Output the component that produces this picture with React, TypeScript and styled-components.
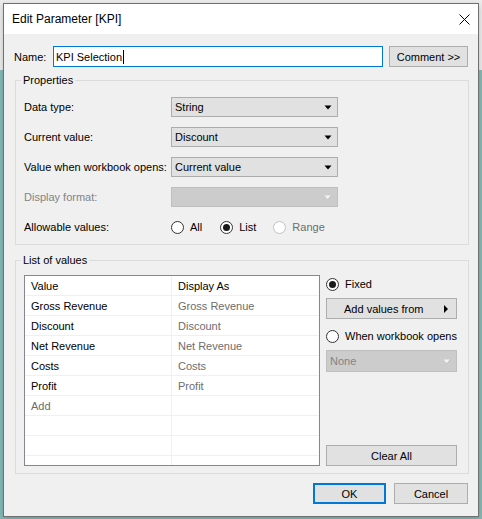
import React from "react";
import styled, { createGlobalStyle } from "styled-components";

const GlobalStyle = createGlobalStyle`
  html, body {
    margin: 0;
    padding: 0;
  }
  body {
    width: 482px;
    height: 519px;
    overflow: hidden;
    background: linear-gradient(to bottom, #ececec 0, #ececec 70px, #86bbb7 70px);
    font-family: "Liberation Sans", Arial, sans-serif;
    font-size: 11px;
    color: #000;
  }
`;

const Window = styled.div`
  margin: 3px 0 0 3px;
  width: 476px;
  height: 514px;
  box-sizing: border-box;
  border: 1px solid #707070;
  background: #f0f0f0;
  display: flex;
  flex-direction: column;
  box-shadow: 0 2px 6px rgba(0, 0, 0, 0.2);
`;

const TitleBar = styled.div`
  height: 30px;
  flex: none;
  background: #fff;
  display: flex;
  align-items: center;
  justify-content: space-between;
  padding: 0 8px 0 8px;
  font-size: 12px;
`;

const Body = styled.div`
  flex: 1;
  display: flex;
  flex-direction: column;
  padding: 12px 10px 12px 10px;
`;

const NameRow = styled.div`
  display: flex;
  align-items: center;
  height: 21px;
`;

const NameLabel = styled.span`
  width: 39px;
  flex: none;
`;

const NameField = styled.div`
  width: 330px;
  height: 21px;
  box-sizing: border-box;
  border: 1px solid #0078d7;
  background: #fff;
  display: flex;
  align-items: center;
  padding-left: 2px;
`;

const Caret = styled.span`
  display: inline-block;
  width: 1px;
  height: 14px;
  background: #000;
  margin-left: 1px;
`;

const Button = styled.div<{ $width?: number; $primary?: boolean; $left?: boolean }>`
  width: ${(p) => (p.$width ? `${p.$width}px` : "auto")};
  height: 21px;
  box-sizing: border-box;
  border: ${(p) => (p.$primary ? "2px solid #0078d7" : "1px solid #adadad")};
  background: #e1e1e1;
  display: flex;
  align-items: center;
  justify-content: ${(p) => (p.$left ? "space-between" : "center")};
  padding: ${(p) => (p.$left ? "0 8px 0 17px" : "0")};
  flex: none;
`;

const Group = styled.fieldset<{ $top: number }>`
  margin: ${(p) => p.$top}px -1px 0 1px;
  border: 1px solid #dcdcdc;
  padding: 10px 10px 7px 8px;
  min-width: 0;
`;

const Legend = styled.legend`
  padding: 0 2px;
  margin-left: -3px;
  line-height: 14px;
`;

const PropGrid = styled.div`
  display: grid;
  grid-template-columns: 147px 167px;
  grid-auto-rows: 20px;
  row-gap: 10px;
  align-items: center;
`;

const Label = styled.span<{ $disabled?: boolean }>`
  color: ${(p) => (p.$disabled ? "#838383" : "#000")};
  white-space: nowrap;
`;

const Combo = styled.div<{ $disabled?: boolean; $height?: number }>`
  height: ${(p) => p.$height ?? 20}px;
  box-sizing: border-box;
  border: 1px solid ${(p) => (p.$disabled ? "#bfbfbf" : "#adadad")};
  background: ${(p) => (p.$disabled ? "#cccccc" : "#e1e1e1")};
  color: ${(p) => (p.$disabled ? "#838383" : "#000")};
  display: flex;
  align-items: center;
  justify-content: space-between;
  padding: 0 5px 0 3px;
`;

const RadioRow = styled.div`
  display: flex;
  align-items: center;
  gap: 0;
`;

const RadioItem = styled.span<{ $disabled?: boolean; $gap?: number }>`
  display: inline-flex;
  align-items: center;
  margin-right: ${(p) => p.$gap ?? 0}px;
  color: ${(p) => (p.$disabled ? "#6d6d6d" : "#000")};
  white-space: nowrap;
`;

const RadioCircle = styled.span<{ $checked?: boolean; $disabled?: boolean }>`
  width: 13px;
  height: 13px;
  box-sizing: border-box;
  border-radius: 50%;
  border: 1px solid ${(p) => (p.$disabled ? "#c2c2c2" : "#333")};
  background: #fff;
  display: inline-flex;
  align-items: center;
  justify-content: center;
  margin-right: 6px;
  &::after {
    content: "";
    width: 7px;
    height: 7px;
    border-radius: 50%;
    background: ${(p) => (p.$checked ? "#1a1a1a" : "transparent")};
  }
`;

const ListArea = styled.div`
  display: flex;
  gap: 6px;
`;

const Table = styled.div`
  width: 296px;
  height: 191px;
  box-sizing: border-box;
  border: 1px solid #828790;
  background: #fff;
  overflow: hidden;
`;

const TableRow = styled.div`
  display: grid;
  grid-template-columns: 146px 1fr;
  height: 20px;
  box-sizing: border-box;
  border-bottom: 1px solid #f0f0f0;
`;

const Cell = styled.div<{ $muted?: boolean }>`
  display: flex;
  align-items: center;
  padding-left: 6px;
  color: ${(p) => (p.$muted ? "#6d6d6d" : "#000")};
  & + & {
    border-left: 1px solid #f0f0f0;
  }
`;

const SideColumn = styled.div`
  width: 131px;
  display: flex;
  flex-direction: column;
`;

const SideRadio = styled.div<{ $top: number }>`
  height: 16px;
  margin-top: ${(p) => p.$top}px;
  display: flex;
  align-items: center;
`;

const Footer = styled.div`
  display: flex;
  justify-content: flex-end;
  gap: 8px;
  margin-top: 9px;
`;

const Arrow = ({ disabled }: { disabled?: boolean }) => (
  <svg width="8" height="5" viewBox="0 0 8 5">
    {disabled ? (
      <>
        <path d="M0.5 0.5 L7.5 0.5 L4 4.5 Z" fill="#f2f2f2" />
        <path d="M4 4.5 L7.5 0.5" stroke="#b0b0b0" strokeWidth="0.8" fill="none" />
      </>
    ) : (
      <path d="M0.5 0.5 L7.5 0.5 L4 4.5 Z" fill="#000" />
    )}
  </svg>
);

const RightArrow = () => (
  <svg width="4" height="8" viewBox="0 0 4 8">
    <path d="M0 0 L4 4 L0 8 Z" fill="#000" />
  </svg>
);

const CloseIcon = () => (
  <svg width="11" height="11" viewBox="0 0 11 11">
    <path d="M0.5 0.5 L10.5 10.5 M10.5 0.5 L0.5 10.5" stroke="#000" strokeWidth="1" />
  </svg>
);

const Radio = ({
  label,
  checked,
  disabled,
  gap,
}: {
  label: string;
  checked?: boolean;
  disabled?: boolean;
  gap?: number;
}) => (
  <RadioItem $disabled={disabled} $gap={gap}>
    <RadioCircle $checked={checked} $disabled={disabled} />
    {label}
  </RadioItem>
);

const values = ["Gross Revenue", "Discount", "Net Revenue", "Costs", "Profit"];

export default function App() {
  return (
    <>
      <GlobalStyle />
      <Window>
        <TitleBar>
          <span>Edit Parameter [KPI]</span>
          <CloseIcon />
        </TitleBar>
        <Body>
          <NameRow>
            <NameLabel>Name:</NameLabel>
            <NameField>
              KPI Selection
              <Caret />
            </NameField>
            <div style={{ width: 6 }} />
            <Button $width={79}>Comment &gt;&gt;</Button>
          </NameRow>

          <Group $top={6}>
            <Legend>Properties</Legend>
            <PropGrid>
              <Label>Data type:</Label>
              <Combo>
                String
                <Arrow />
              </Combo>
              <Label>Current value:</Label>
              <Combo>
                Discount
                <Arrow />
              </Combo>
              <Label>Value when workbook opens:</Label>
              <Combo>
                Current value
                <Arrow />
              </Combo>
              <Label $disabled>Display format:</Label>
              <Combo $disabled>
                <span />
                <Arrow disabled />
              </Combo>
              <Label>Allowable values:</Label>
              <RadioRow>
                <Radio label="All" gap={18} />
                <Radio label="List" checked gap={17} />
                <Radio label="Range" disabled />
              </RadioRow>
            </PropGrid>
          </Group>

          <Group $top={8} style={{ paddingTop: 8 }}>
            <Legend>List of values</Legend>
            <ListArea>
              <Table>
                <TableRow>
                  <Cell>Value</Cell>
                  <Cell>Display As</Cell>
                </TableRow>
                {values.map((v) => (
                  <TableRow key={v}>
                    <Cell>{v}</Cell>
                    <Cell $muted>{v}</Cell>
                  </TableRow>
                ))}
                <TableRow>
                  <Cell $muted>Add</Cell>
                  <Cell />
                </TableRow>
                <TableRow>
                  <Cell />
                  <Cell />
                </TableRow>
                <TableRow>
                  <Cell />
                  <Cell />
                </TableRow>
                <TableRow>
                  <Cell />
                  <Cell />
                </TableRow>
              </Table>
              <SideColumn>
                <SideRadio $top={1}>
                  <Radio label="Fixed" checked />
                </SideRadio>
                <div style={{ height: 6 }} />
                <Button $left>
                  Add values from
                  <RightArrow />
                </Button>
                <SideRadio $top={9}>
                  <Radio label="When workbook opens" />
                </SideRadio>
                <div style={{ height: 6 }} />
                <Combo $disabled $height={22}>
                  None
                  <Arrow disabled />
                </Combo>
                <div style={{ flex: 1 }} />
                <Button>Clear All</Button>
              </SideColumn>
            </ListArea>
          </Group>

          <Footer>
            <Button $width={73} $primary>
              OK
            </Button>
            <Button $width={74}>Cancel</Button>
          </Footer>
        </Body>
      </Window>
    </>
  );
}
